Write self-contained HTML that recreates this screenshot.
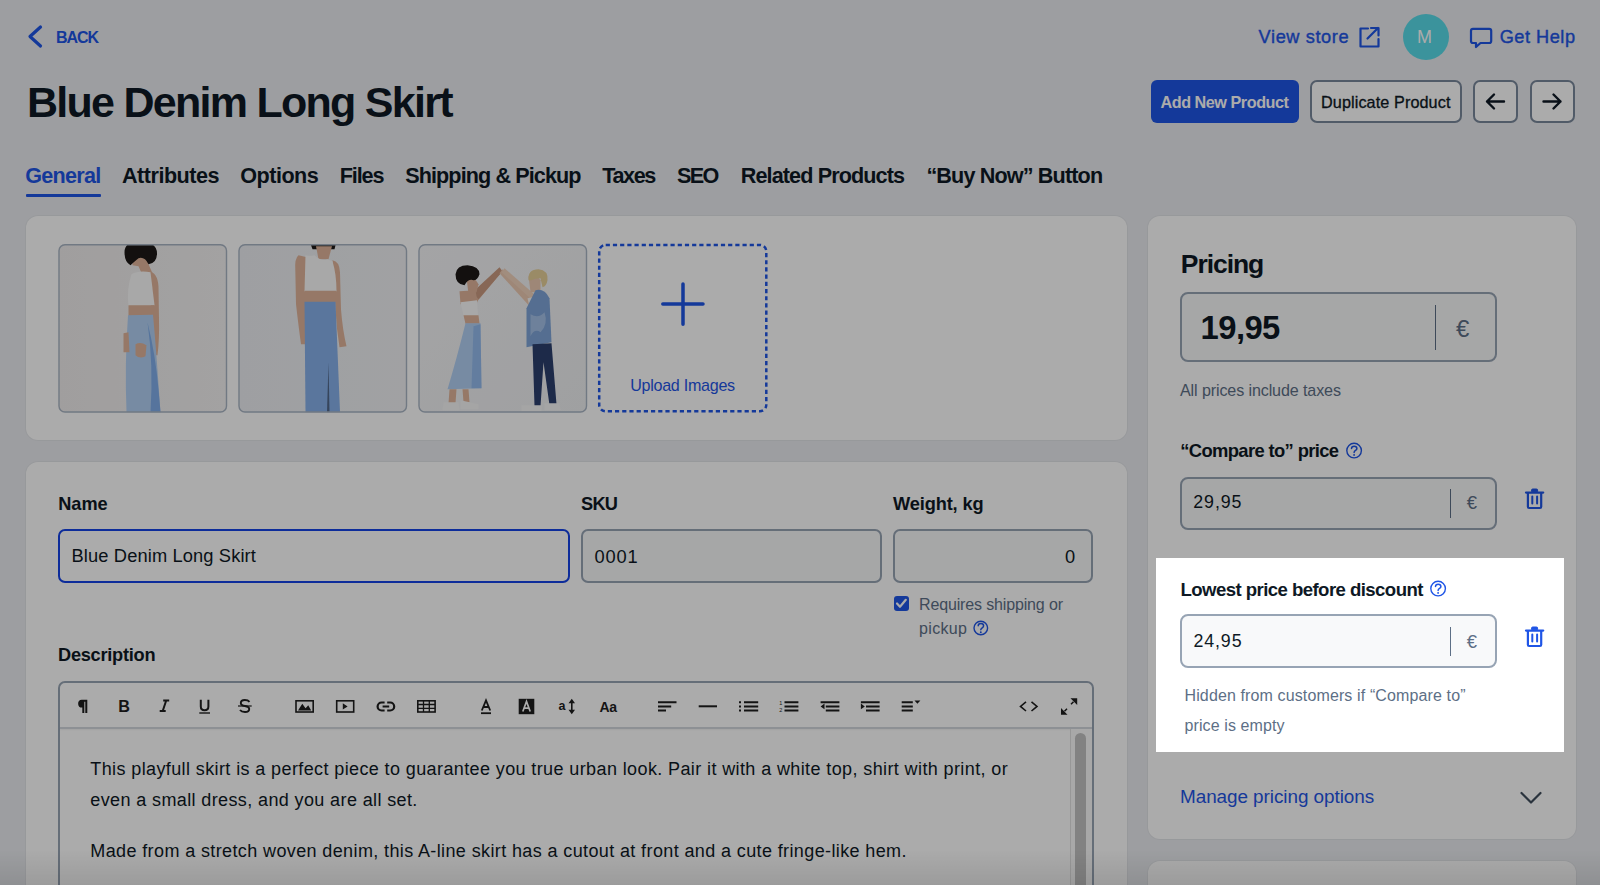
<!DOCTYPE html>
<html><head><meta charset="utf-8">
<style>
:root{--dark:#0e1925;--blue:#1f55e6;--gray:#5d6f86;--border:#97a4b4;--ibg:#f8f9fa;}
html,body{margin:0;padding:0;}
body{width:1600px;height:885px;overflow:hidden;position:relative;background:#eaecf0;font-family:"Liberation Sans",sans-serif;}
.t{position:absolute;white-space:nowrap;}
.b{position:absolute;box-sizing:border-box;}
svg{position:absolute;overflow:visible;}
</style></head><body>
<svg style="left:0;top:0" width="1600" height="885" viewBox="0 0 1600 885"><path d="M40.5 27 L30 36.5 L40.5 46" fill="none" stroke="var(--blue)" stroke-width="3.2" stroke-linecap="round" stroke-linejoin="round"/></svg>
<div class="t" style="left:56.00px;top:29.66px;font-size:16px;line-height:16px;font-weight:bold;color:var(--blue);letter-spacing:-1.073px;">BACK</div>
<div class="t" style="left:27.00px;top:81.20px;font-size:43px;line-height:43px;font-weight:bold;color:var(--dark);letter-spacing:-1.730px;">Blue Denim Long Skirt</div>
<div class="t" style="left:1258.60px;top:28.19px;font-size:18.2px;line-height:18.2px;font-weight:normal;color:var(--blue);letter-spacing:0.596px;-webkit-text-stroke:0.4px var(--blue);">View store</div>
<svg style="left:0;top:0" width="1600" height="885"><path d="M1368 28.5 H1360.5 V46.5 H1378.5 V39" fill="none" stroke="var(--blue)" stroke-width="2.2" stroke-linecap="round" stroke-linejoin="round"/><path d="M1367.5 38.5 L1378 28 M1371 28 H1378.5 V35.5" fill="none" stroke="var(--blue)" stroke-width="2.2" stroke-linecap="round" stroke-linejoin="round"/></svg>
<div class="b" style="left:1402.5px;top:13.5px;width:46px;height:46px;border-radius:50%;background:#58dbe9;"></div>
<div class="t" style="left:1417.00px;top:28.26px;font-size:18px;line-height:18px;font-weight:normal;color:#ffffff;letter-spacing:0.000px;">M</div>
<svg style="left:0;top:0" width="1600" height="885"><path d="M1473 28.8 H1489.2 Q1491.2 28.8 1491.2 30.8 V41 Q1491.2 43 1489.2 43 H1480.5 L1476 47 V43 H1473 Q1471 43 1471 41 V30.8 Q1471 28.8 1473 28.8 Z" fill="none" stroke="var(--blue)" stroke-width="2.2" stroke-linejoin="round"/></svg>
<div class="t" style="left:1499.70px;top:28.19px;font-size:18.2px;line-height:18.2px;font-weight:normal;color:var(--blue);letter-spacing:0.511px;-webkit-text-stroke:0.4px var(--blue);">Get Help</div>
<div class="b" style="left:1151.00px;top:80.00px;width:148.00px;height:43.00px;background:var(--blue);border-radius:6px;"></div>
<div class="t" style="left:1160.50px;top:94.29px;font-size:16.2px;line-height:16.2px;font-weight:bold;color:#ffffff;letter-spacing:-0.464px;">Add New Product</div>
<div class="b" style="left:1310.00px;top:79.70px;width:151.60px;height:43.30px;background:#fff;border:2px solid #7a889b;border-radius:7px;"></div>
<div class="t" style="left:1321.00px;top:94.29px;font-size:16.2px;line-height:16.2px;font-weight:normal;color:var(--dark);letter-spacing:0.102px;-webkit-text-stroke:0.3px var(--dark);">Duplicate Product</div>
<div class="b" style="left:1472.60px;top:79.70px;width:45.40px;height:43.30px;background:#fff;border:2px solid #7a889b;border-radius:7px;"></div>
<div class="b" style="left:1529.50px;top:79.70px;width:45.80px;height:43.30px;background:#fff;border:2px solid #7a889b;border-radius:7px;"></div>
<svg style="left:0;top:0" width="1600" height="885"><path d="M1504 101.5 H1487 M1494 94.5 L1487 101.5 L1494 108.5" fill="none" stroke="var(--dark)" stroke-width="2.4" stroke-linecap="round" stroke-linejoin="round"/><path d="M1543.5 101.5 H1560.5 M1553.5 94.5 L1560.5 101.5 L1553.5 108.5" fill="none" stroke="var(--dark)" stroke-width="2.4" stroke-linecap="round" stroke-linejoin="round"/></svg>
<div class="t" style="left:25.25px;top:164.72px;font-size:21.6px;line-height:21.6px;font-weight:bold;color:var(--blue);letter-spacing:0.000px;letter-spacing:-0.732px;">General</div>
<div class="t" style="left:122.00px;top:164.72px;font-size:21.6px;line-height:21.6px;font-weight:bold;color:var(--dark);letter-spacing:0.000px;letter-spacing:-0.494px;">Attributes</div>
<div class="t" style="left:240.25px;top:164.72px;font-size:21.6px;line-height:21.6px;font-weight:bold;color:var(--dark);letter-spacing:0.000px;letter-spacing:-0.507px;">Options</div>
<div class="t" style="left:339.75px;top:164.72px;font-size:21.6px;line-height:21.6px;font-weight:bold;color:var(--dark);letter-spacing:0.000px;letter-spacing:-1.105px;">Files</div>
<div class="t" style="left:405.20px;top:164.72px;font-size:21.6px;line-height:21.6px;font-weight:bold;color:var(--dark);letter-spacing:0.000px;letter-spacing:-0.900px;">Shipping &amp; Pickup</div>
<div class="t" style="left:602.30px;top:164.72px;font-size:21.6px;line-height:21.6px;font-weight:bold;color:var(--dark);letter-spacing:0.000px;letter-spacing:-1.410px;">Taxes</div>
<div class="t" style="left:677.00px;top:164.72px;font-size:21.6px;line-height:21.6px;font-weight:bold;color:var(--dark);letter-spacing:0.000px;letter-spacing:-1.659px;">SEO</div>
<div class="t" style="left:740.70px;top:164.72px;font-size:21.6px;line-height:21.6px;font-weight:bold;color:var(--dark);letter-spacing:0.000px;letter-spacing:-0.883px;">Related Products</div>
<div class="t" style="left:926.40px;top:164.72px;font-size:21.6px;line-height:21.6px;font-weight:bold;color:var(--dark);letter-spacing:0.000px;letter-spacing:-0.851px;">“Buy Now” Button</div>
<div class="b" style="left:26.00px;top:193.80px;width:74.80px;height:3.20px;background:var(--blue);border-radius:1px;"></div>
<div class="b" style="left:26.00px;top:216.00px;width:1100.50px;height:224.00px;background:#fff;border-radius:12px;box-shadow:0 0 0 1px rgba(0,0,0,.03);"></div>
<svg style="left:0;top:0" width="1600" height="885" viewBox="0 0 1600 885"><defs><clipPath id="c0"><rect x="0" y="0" width="168.5" height="168.3" rx="6"/></clipPath><clipPath id="c1"><rect x="0" y="0" width="168.5" height="168.3" rx="6"/></clipPath><clipPath id="c2"><rect x="0" y="0" width="168.5" height="168.3" rx="6"/></clipPath><linearGradient id="bg1" x1="0" y1="0" x2="1" y2="0"><stop offset="0" stop-color="#efecec"/><stop offset="1" stop-color="#f3f2f2"/></linearGradient><linearGradient id="bg2" x1="0" y1="0" x2="1" y2="0"><stop offset="0" stop-color="#eceef2"/><stop offset="1" stop-color="#f0f1f3"/></linearGradient><linearGradient id="bg3" x1="0" y1="0" x2="1" y2="1"><stop offset="0" stop-color="#f5f5f7"/><stop offset="1" stop-color="#eeeff1"/></linearGradient></defs><g clip-path="url(#c0)" transform="translate(58.5,244.2)"><rect x="0" y="0" width="168.5" height="168.3" fill="url(#bg1)"/><path d="M90 27 Q99 28 100 42 L100.5 75 Q101 95 99 111 L93 111 Q95 92 94 72 L89 40 Z" fill="#e0b49a"/><path d="M74 9 L88 9 L90 20 L94 29 L84 31 L80 22 L74 21 Z" fill="#e0b49a"/><path d="M66 8 Q66 -3 82 -3 Q99 -2 98.5 10 Q98 19 90 20 Q86 12 80 14 Q75 18 72 21 Q66 18 66 8 Z" fill="#1d1917"/><path d="M73 30 Q80 26 92 28 L96 61 L70 61.5 Q68 45 73 30 Z" fill="#fbfbfb"/><path d="M70 61 L95.5 61 L95 72 L70 72 Z" fill="#e0b49a"/><path d="M69.5 71 L94.5 70.5 Q98 110 100 140 L102 168 L68 168 Q66 120 69.5 71 Z" fill="#b2d0f4"/><path d="M89 78 Q97 110 100 145 L102 168 L92 168 Q95 120 89 78 Z" fill="#80aeea"/><path d="M77 100 Q82 97 88 101 L87 112 Q81 115 77 111 Z" fill="#e0b49a"/><path d="M65 89 L70 88 L71 108 L65 108 Z" fill="#e0b49a"/></g><g clip-path="url(#c1)" transform="translate(238.5,244.2)"><rect x="0" y="0" width="168.5" height="168.3" fill="url(#bg2)"/><path d="M71 -3 Q85 -5 98 -3 L96 5 L74 5 Z" fill="#1d1917"/><path d="M77.5 2 L93.5 2 L90 15 L80 15 Z" fill="#e0b49a"/><path d="M60 11 Q56 14 56.8 26 L57.5 60 Q60 82 62.5 100 L70 100 Q67 80 67 60 L68.5 13 Z" fill="#e0b49a"/><path d="M94 16 Q101 17 101.5 28 L102.5 65 Q104 85 108 102 L101 103 Q98 85 97 65 Z" fill="#e0b49a"/><path d="M67 11 Q72 12 76 11 Q82 17 89 15 L94 17 Q98 30 98 47 Q82 48 66 47 Z" fill="#fbfbfb"/><path d="M66.5 46.5 L97.5 46.5 L97 58 L66 58 Z" fill="#e0b49a"/><path d="M66 57.5 L97 57.5 L101.5 168 L67 168 Z" fill="#86b0ea"/><path d="M90 118 L91 168 L88.5 168 Z" fill="#51678a"/></g><g clip-path="url(#c2)" transform="translate(418.5,244.2)"><rect x="0" y="0" width="168.5" height="168.3" fill="url(#bg3)"/><path d="M50 52 L80 25 L83 28 L58 58 Z" fill="#e0b49a"/><path d="M54 48 L81 23 L84 27 L60 55 Z" fill="#c99a80"/><path d="M84 25 L117 58 L112 63 L81 29 Z" fill="#ecc9b2"/><path d="M86 24 L118 52 L115 57 L83 28 Z" fill="#f0d2bd"/><path d="M48 34 Q56 32 60 40 L58 48 L50 50 Z" fill="#e0b49a"/><path d="M37 30 Q38 21 49 21 Q61 22 61 30 Q59 36 55 36 Q50 34 46 41 Q37 40 37 30 Z" fill="#1d1917"/><path d="M41 47 L57 46 L59 58 L42 60 Z" fill="#e0b49a"/><path d="M42 58 L58.5 56 L59.5 71 L45 71.5 Z" fill="#fbfbfb"/><path d="M45 71 L60 71 L61 79.5 L47 79.5 Z" fill="#e0b49a"/><path d="M47 79 L62 79 L63 144 L29 145 Q38 115 47 79 Z" fill="#b2d0f4"/><path d="M55 82 L62 80 L63 144 L53 144 Z" fill="#80aeea" opacity=".6"/><path d="M31 145 L38 145 L37 159 L30 159 Z M44 145 L50 145 L51 158 L45 158 Z" fill="#e0b49a"/><path d="M25 158 L40 158 L41 166 L24 166 Z M42 156 L60 160 L60 165 L42 165 Z" fill="#f6f6f6"/><path d="M110 32 Q118 30 122 36 L122 48 L112 48 Z" fill="#ecc9b2"/><path d="M110 36 Q109 25 120 25 Q130 26 129 36 Q128 42 124 43 L122 34 Q116 34 113 36 Z" fill="#e6cf98"/><path d="M109 54 L128 50 L131 64 L112 67 Z" fill="#f6f6f6"/><path d="M117 46 Q126 44 131 54 L133 98 L108 103 L108 64 Z" fill="#7fa5d8"/><path d="M112 70 Q120 75 126 68 Q130 80 122 88 Q116 84 112 92 Z" fill="#b5cdee" opacity=".7"/><path d="M114 100 L133 99 L138 160 L131 161 L125 118 L122 162 L116 162 Z" fill="#2c3f6e"/><path d="M103 161 L123 161 L123 167 L103 167 Z M126 159 L141 159 L142 166 L126 166 Z" fill="#f6f6f6"/></g><rect x="59.0" y="244.7" width="167.5" height="167.3" rx="6" fill="none" stroke="#a9b5c4" stroke-width="1.4"/><rect x="239.0" y="244.7" width="167.5" height="167.3" rx="6" fill="none" stroke="#a9b5c4" stroke-width="1.4"/><rect x="419.0" y="244.7" width="167.5" height="167.3" rx="6" fill="none" stroke="#a9b5c4" stroke-width="1.4"/></svg>
<svg style="left:0;top:0" width="1600" height="885"><rect x="599.2" y="244.9" width="167.1" height="166.4" rx="6.5" fill="none" stroke="var(--blue)" stroke-width="2.5" stroke-dasharray="4.2 3"/></svg>
<svg style="left:0;top:0" width="1600" height="885"><path d="M683 284 V324.2 M662.8 304 H703" fill="none" stroke="var(--blue)" stroke-width="3.5" stroke-linecap="round"/></svg>
<div class="t" style="left:630.20px;top:377.27px;font-size:16.1px;line-height:16.1px;font-weight:normal;color:var(--blue);letter-spacing:-0.274px;">Upload Images</div>
<div class="b" style="left:26.00px;top:462.00px;width:1100.50px;height:458.00px;background:#fff;border-radius:12px;box-shadow:0 0 0 1px rgba(0,0,0,.03);"></div>
<div class="t" style="left:58.30px;top:495.39px;font-size:18.2px;line-height:18.2px;font-weight:bold;color:var(--dark);letter-spacing:-0.057px;">Name</div>
<div class="t" style="left:581.00px;top:495.39px;font-size:18.2px;line-height:18.2px;font-weight:bold;color:var(--dark);letter-spacing:-0.713px;">SKU</div>
<div class="t" style="left:893.00px;top:495.39px;font-size:18.2px;line-height:18.2px;font-weight:bold;color:var(--dark);letter-spacing:-0.119px;">Weight, kg</div>
<div class="b" style="left:58.00px;top:528.80px;width:512.30px;height:54.00px;background:#fff;border:2.4px solid #1442e6;border-radius:7px;"></div>
<div class="t" style="left:71.50px;top:547.21px;font-size:18.3px;line-height:18.3px;font-weight:normal;color:var(--dark);letter-spacing:0.126px;">Blue Denim Long Skirt</div>
<div class="b" style="left:581.20px;top:528.80px;width:301.10px;height:54.00px;background:var(--ibg);border:2px solid var(--border);border-radius:7px;"></div>
<div class="t" style="left:594.40px;top:547.51px;font-size:18.3px;line-height:18.3px;font-weight:normal;color:var(--dark);letter-spacing:0.829px;">0001</div>
<div class="b" style="left:892.80px;top:528.80px;width:200.40px;height:54.00px;background:var(--ibg);border:2px solid var(--border);border-radius:7px;"></div>
<div class="t" style="left:1065.00px;top:547.51px;font-size:18.3px;line-height:18.3px;font-weight:normal;color:var(--dark);letter-spacing:0.000px;">0</div>
<div class="b" style="left:893.50px;top:595.70px;width:15.80px;height:15.60px;background:var(--blue);border-radius:3px;"></div>
<svg style="left:0;top:0" width="1600" height="885"><path d="M897 603.5 L900 606.8 L905.8 599.8" fill="none" stroke="#fff" stroke-width="2.2" stroke-linecap="round" stroke-linejoin="round"/></svg>
<div class="t" style="left:919.00px;top:597.46px;font-size:16px;line-height:16px;font-weight:normal;color:var(--gray);letter-spacing:-0.145px;">Requires shipping or</div>
<div class="t" style="left:919.00px;top:621.26px;font-size:16px;line-height:16px;font-weight:normal;color:var(--gray);letter-spacing:0.350px;">pickup</div>
<svg style="left:0;top:0" width="1600" height="885"><circle cx="980.8" cy="628" r="6.8" fill="none" stroke="var(--blue)" stroke-width="1.4"/><path d="M978.1999999999999 625.8 C978.1999999999999 622.8 983.5999999999999 622.8 983.5999999999999 625.8 C983.5999999999999 628 980.8 627.6 980.8 629.8" fill="none" stroke="var(--blue)" stroke-width="1.5" stroke-linecap="round"/><circle cx="980.8" cy="632.3" r="0.95" fill="var(--blue)"/></svg>
<div class="t" style="left:58.00px;top:646.49px;font-size:18.2px;line-height:18.2px;font-weight:bold;color:var(--dark);letter-spacing:-0.252px;">Description</div>
<div class="b" style="left:58.20px;top:681.20px;width:1035.80px;height:238.80px;background:#fff;border:2px solid var(--border);border-radius:7px;"></div>
<div class="b" style="left:60.00px;top:727.40px;width:1032.00px;height:2.00px;background:#d3d7dd;box-shadow:0 1px 2px rgba(0,0,0,.06);"></div>
<svg style="left:0;top:0" width="1600" height="885" viewBox="0 0 1600 885"><path d="M81.8 699.8 H87.3 V713 H85.3 V701.8 H84.3 V713 H82.3 V707.6 A3.9 3.9 0 0 1 81.8 699.8 Z" fill="#1e1e1e"/><text x="118.3" y="711.6" font-family="Liberation Sans" font-weight="bold" font-size="16.2" fill="#1e1e1e">B</text><path d="M163.2 700.5 H169.2 M159.7 711 H165.7 M166.2 700.5 L162.7 711" fill="none" stroke="#1e1e1e" stroke-width="2"/><path d="M200.8 699.7 V706.5 Q200.8 710.2 204.6 710.2 Q208.4 710.2 208.4 706.5 V699.7" fill="none" stroke="#1e1e1e" stroke-width="2"/><path d="M199.3 713 H210" stroke="#1e1e1e" stroke-width="1.4"/><path d="M249.5 701.8 Q248 700 244.8 700 Q240.8 700 240.8 703 Q240.8 705.3 245 706 Q249.2 706.8 249.2 709 Q249.2 712 245 712 Q241.5 712 240 710" fill="none" stroke="#1e1e1e" stroke-width="1.9"/><path d="M238 706 H251.7" stroke="#1e1e1e" stroke-width="1.2"/><rect x="296" y="700.8" width="17.2" height="11.2" fill="none" stroke="#1e1e1e" stroke-width="1.6"/><path d="M298 710.5 L302.3 703.8 L305.5 708.3 L307 706.8 L308.2 705.3 L311.2 710.5 Z" fill="#1e1e1e"/><rect x="336.7" y="700.8" width="17" height="11.2" fill="none" stroke="#1e1e1e" stroke-width="1.6"/><path d="M342.8 703.3 L347.6 706.4 L342.8 709.5 Z" fill="#1e1e1e"/><path d="M384.6 702.5 H381.6 A4 4 0 0 0 381.6 710.5 H384.6 M387.2 702.5 H390.2 A4 4 0 0 1 390.2 710.5 H387.2 M382.6 706.5 H389.2" fill="none" stroke="#1e1e1e" stroke-width="2.2"/><rect x="417.8" y="700.8" width="17.3" height="11.2" fill="none" stroke="#1e1e1e" stroke-width="1.6"/><path d="M417.8 704.5 H435.1 M417.8 708.3 H435.1 M423.5 700.8 V712 M429.3 700.8 V712" fill="none" stroke="#1e1e1e" stroke-width="1.3"/><path d="M481.8 710.5 L486 700.3 L490.2 710.5 M483.3 707 H488.7" fill="none" stroke="#1e1e1e" stroke-width="1.8"/><rect x="481" y="712.3" width="10" height="1.8" fill="#1e1e1e"/><rect x="518.7" y="698.8" width="15.6" height="15.4" fill="#1e1e1e"/><path d="M522.8 711.5 L526.5 701.5 L530.2 711.5 M524 708.2 H529" fill="none" stroke="#fff" stroke-width="1.7"/><text x="558.6" y="710.3" font-family="Liberation Sans" font-weight="bold" font-size="12.5" fill="#1e1e1e">a</text><path d="M571.8 700.5 V712.5" stroke="#1e1e1e" stroke-width="1.6"/><path d="M568.5 703.2 L571.8 698.8 L575 703.2 Z M568.5 709.8 L571.8 714.2 L575 709.8 Z" fill="#1e1e1e"/><text x="599.6" y="711.5" font-family="Liberation Sans" font-weight="bold" font-size="14" fill="#1e1e1e" letter-spacing="-0.4">Aa</text><path d="M658 702.2 H676.5 M658 706.4 H671.2 M658 710.6 H666" stroke="#1e1e1e" stroke-width="2"/><path d="M698.7 706.3 H717" stroke="#1e1e1e" stroke-width="2"/><path d="M739 702.2 H741 M739 706.4 H741 M739 710.6 H741 M744 702.2 H758.2 M744 706.4 H758.2 M744 710.6 H758.2" stroke="#1e1e1e" stroke-width="2"/><path d="M784.5 702.2 H798.4 M784.5 706.4 H798.4 M784.5 710.6 H798.4" stroke="#1e1e1e" stroke-width="2"/><text x="779.3" y="704.5" font-family="Liberation Sans" font-size="5.5" fill="#1e1e1e">1</text><text x="779.3" y="711.5" font-family="Liberation Sans" font-size="5.5" fill="#1e1e1e">2</text><path d="M820.6 702.2 H839.4 M825.8 706.4 H839.4 M825.8 710.6 H839.4" stroke="#1e1e1e" stroke-width="2"/><path d="M820.6 706.4 L824.5 703.6 V709.2 Z" fill="#1e1e1e"/><path d="M860.9 702.2 H879.6 M866 706.4 H879.6 M866 710.6 H879.6" stroke="#1e1e1e" stroke-width="2"/><path d="M864.8 706.4 L860.9 703.6 V709.2 Z" fill="#1e1e1e"/><path d="M901.7 702.2 H912.8 M901.7 706.4 H912.8 M901.7 710.6 H912.8" stroke="#1e1e1e" stroke-width="2"/><path d="M914.5 700.5 H920.4 L917.4 703.8 Z" fill="#1e1e1e"/><path d="M1026 701.8 L1020.5 706.4 L1026 711 M1031.5 701.8 L1037 706.4 L1031.5 711" fill="none" stroke="#1e1e1e" stroke-width="1.6"/><path d="M1070.5 698.3 H1077.2 V705 Z M1067.5 714.7 H1061 V708 Z" fill="#1e1e1e"/><path d="M1071 704.2 L1073.5 701.8 M1067 708.8 L1064.5 711.2" stroke="#1e1e1e" stroke-width="1.5"/></svg>
<div class="b" style="left:1069.50px;top:729.40px;width:22.50px;height:170.60px;background:#fbfbfb;border-left:1px solid #e2e2e2;"></div>
<div class="b" style="left:1075.00px;top:733.00px;width:11.00px;height:167.00px;background:#c2c2c2;border-radius:6px;"></div>
<div class="t" style="left:90.30px;top:760.06px;font-size:18px;line-height:18px;font-weight:normal;color:#0e1925;letter-spacing:0.390px;">This playfull skirt is a perfect piece to guarantee you true urban look. Pair it with a white top, shirt with print, or</div>
<div class="t" style="left:90.30px;top:791.06px;font-size:18px;line-height:18px;font-weight:normal;color:#0e1925;letter-spacing:0.000px;letter-spacing:0.382px;">even a small dress, and you are all set.</div>
<div class="t" style="left:90.30px;top:841.76px;font-size:18px;line-height:18px;font-weight:normal;color:#0e1925;letter-spacing:0.000px;letter-spacing:0.382px;">Made from a stretch woven denim, this A-line skirt has a cutout at front and a cute fringe-like hem.</div>
<div class="b" style="left:1147.70px;top:216.00px;width:428.10px;height:623.00px;background:#fff;border-radius:12px;box-shadow:0 0 0 1px rgba(0,0,0,.03);"></div>
<div class="b" style="left:1147.70px;top:861.30px;width:428.10px;height:138.70px;background:#fff;border-radius:12px;box-shadow:0 0 0 1px rgba(0,0,0,.03);"></div>
<div class="t" style="left:1180.80px;top:251.07px;font-size:26.5px;line-height:26.5px;font-weight:bold;color:var(--dark);letter-spacing:-1.054px;">Pricing</div>
<div class="b" style="left:1180.30px;top:292.20px;width:316.30px;height:70.00px;background:var(--ibg);border:2px solid var(--border);border-radius:8px;"></div>
<div class="t" style="left:1200.60px;top:311.73px;font-size:32.8px;line-height:32.8px;font-weight:bold;color:var(--dark);letter-spacing:-0.595px;">19,95</div>
<div class="b" style="left:1434.80px;top:305.00px;width:1.50px;height:45.00px;background:var(--gray);"></div>
<div class="t" style="left:1456.00px;top:316.98px;font-size:24px;line-height:24px;font-weight:normal;color:var(--gray);letter-spacing:0.000px;">€</div>
<div class="t" style="left:1180.00px;top:381.57px;font-size:16.1px;line-height:16.1px;font-weight:normal;color:var(--gray);letter-spacing:-0.120px;">All prices include taxes</div>
<div class="t" style="left:1180.20px;top:442.02px;font-size:18.4px;line-height:18.4px;font-weight:bold;color:var(--dark);letter-spacing:-0.631px;">“Compare to” price</div>
<div class="b" style="left:1180.30px;top:476.80px;width:316.30px;height:53.20px;background:var(--ibg);border:2px solid var(--border);border-radius:8px;"></div>
<div class="t" style="left:1193.30px;top:494.33px;font-size:17.8px;line-height:17.8px;font-weight:normal;color:var(--dark);letter-spacing:0.914px;">29,95</div>
<div class="b" style="left:1449.80px;top:489.00px;width:1.50px;height:29.00px;background:var(--gray);"></div>
<div class="t" style="left:1466.80px;top:493.94px;font-size:18.5px;line-height:18.5px;font-weight:normal;color:var(--gray);letter-spacing:0.000px;">€</div>
<svg style="left:0;top:0" width="1600" height="885"><circle cx="1354.1" cy="450.6" r="7.3" fill="none" stroke="var(--blue)" stroke-width="1.4"/><path d="M1351.5 448.40000000000003 C1351.5 445.40000000000003 1356.8999999999999 445.40000000000003 1356.8999999999999 448.40000000000003 C1356.8999999999999 450.6 1354.1 450.20000000000005 1354.1 452.40000000000003" fill="none" stroke="var(--blue)" stroke-width="1.5" stroke-linecap="round"/><circle cx="1354.1" cy="454.90000000000003" r="0.95" fill="var(--blue)"/></svg>
<svg style="left:1525.1px;top:487.7px" width="19" height="21" viewBox="0 0 19 21"><path d="M1 4.6 H18.2" stroke="var(--blue)" stroke-width="2.2" stroke-linecap="round"/><path d="M6.6 3.6 V2 Q6.6 1 7.8 1 H11.4 Q12.6 1 12.6 2 V3.6 Z" fill="var(--blue)" stroke="var(--blue)" stroke-width="1"/><path d="M2.9 5 V18.8 Q2.9 20 4.1 20 H15 Q16.2 20 16.2 18.8 V5" fill="none" stroke="var(--blue)" stroke-width="2.2" stroke-linejoin="round"/><path d="M7.3 8.6 V15.6 M12.1 8.6 V15.6" stroke="var(--blue)" stroke-width="2" stroke-linecap="round"/></svg>
<div class="t" style="left:1180.00px;top:788.10px;font-size:18.9px;line-height:18.9px;font-weight:normal;color:var(--blue);letter-spacing:-0.058px;">Manage pricing options</div>
<svg style="left:0;top:0" width="1600" height="885"><path d="M1521.5 793 L1531 802.5 L1540.5 793" fill="none" stroke="#3f4d5c" stroke-width="2.2" stroke-linecap="round" stroke-linejoin="round"/></svg>
<div class="b" style="left:0;top:850px;width:1600px;height:35px;background:linear-gradient(to bottom,rgba(0,0,0,0),rgba(0,0,0,.09));"></div>
<div class="b" style="left:0;top:0;width:1600px;height:885px;background:rgba(0,0,0,.33);"></div>
<div class="b" style="left:1156.00px;top:558.00px;width:408.00px;height:194.00px;background:#fff;"></div>
<div class="t" style="left:1180.50px;top:580.56px;font-size:18.6px;line-height:18.6px;font-weight:bold;color:var(--dark);letter-spacing:-0.569px;">Lowest price before discount</div>
<div class="b" style="left:1180.30px;top:614.10px;width:316.50px;height:53.90px;background:var(--ibg);border:2px solid var(--border);border-radius:8px;"></div>
<div class="t" style="left:1193.40px;top:632.93px;font-size:17.8px;line-height:17.8px;font-weight:normal;color:var(--dark);letter-spacing:0.914px;">24,95</div>
<div class="b" style="left:1449.70px;top:626.50px;width:1.50px;height:29.20px;background:var(--gray);"></div>
<div class="t" style="left:1466.80px;top:633.14px;font-size:18.5px;line-height:18.5px;font-weight:normal;color:var(--gray);letter-spacing:0.000px;">€</div>
<svg style="left:1525.1px;top:626px" width="19" height="21" viewBox="0 0 19 21"><path d="M1 4.6 H18.2" stroke="var(--blue)" stroke-width="2.2" stroke-linecap="round"/><path d="M6.6 3.6 V2 Q6.6 1 7.8 1 H11.4 Q12.6 1 12.6 2 V3.6 Z" fill="var(--blue)" stroke="var(--blue)" stroke-width="1"/><path d="M2.9 5 V18.8 Q2.9 20 4.1 20 H15 Q16.2 20 16.2 18.8 V5" fill="none" stroke="var(--blue)" stroke-width="2.2" stroke-linejoin="round"/><path d="M7.3 8.6 V15.6 M12.1 8.6 V15.6" stroke="var(--blue)" stroke-width="2" stroke-linecap="round"/></svg>
<svg style="left:0;top:0" width="1600" height="885"><circle cx="1438.1" cy="588.6" r="7.3" fill="none" stroke="var(--blue)" stroke-width="1.4"/><path d="M1435.5 586.4 C1435.5 583.4 1440.8999999999999 583.4 1440.8999999999999 586.4 C1440.8999999999999 588.6 1438.1 588.2 1438.1 590.4" fill="none" stroke="var(--blue)" stroke-width="1.5" stroke-linecap="round"/><circle cx="1438.1" cy="592.9" r="0.95" fill="var(--blue)"/></svg>
<div class="t" style="left:1184.50px;top:687.66px;font-size:16px;line-height:16px;font-weight:normal;color:var(--gray);letter-spacing:0.124px;">Hidden from customers if “Compare to”</div>
<div class="t" style="left:1184.50px;top:717.66px;font-size:16px;line-height:16px;font-weight:normal;color:var(--gray);letter-spacing:0.100px;">price is empty</div>
</body></html>
